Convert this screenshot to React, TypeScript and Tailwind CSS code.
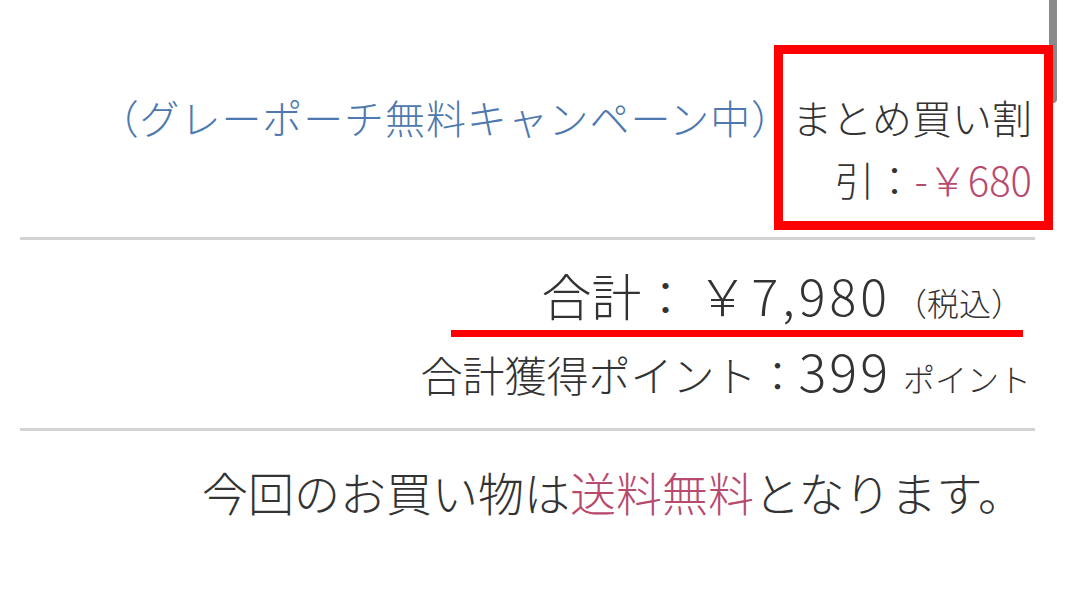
export default function App() {
  return (
    <div
      className="relative h-[601px] w-[1080px] overflow-hidden bg-white font-light text-[#333333]"
      style={{ fontFamily: '"Noto Sans CJK JP", "Noto Sans", sans-serif' }}
    >
      {/* 注文合計ブロック */}
      <div className="ml-[20px] flex w-[1015px] flex-col">
        <div className="flex flex-col items-end pt-[86px] pb-[27px] pr-[3px] text-[40px] leading-[62px]">
          <div>
            <span className="tracking-[0.9px] text-[#4d78b0]">（グレーポーチ無料キャンペーン中）</span>
            <span>まとめ買い割</span>
          </div>
          <div>
            引：<span className="text-[#b84a6e]">-￥680</span>
          </div>
        </div>

        <div className="h-[3px] bg-[#d3d3d3]" />

        <div className="flex flex-col items-end pr-[12px] pt-[24px]">
          <div className="flex items-baseline leading-[60px]">
            <span className="text-[50px]">合計</span>
            <span className="mr-[8px] text-[48px]">：</span>
            <span className="text-[50px] tracking-[4px]">￥7,980</span>
            <span className="ml-[4px] text-[32px]">（税込）</span>
          </div>
          <div className="-mt-[2px] h-[7px] w-[572px] bg-[#ff0000]" />
        </div>

        <div className="flex items-baseline justify-end pr-[4px] pt-[8px] pb-[25px] leading-[50px]">
          <span className="text-[42px]">合計獲得ポイント：</span>
          <span className="text-[52px] tracking-[3px]">399</span>
          <span className="ml-[12px] text-[32px]">ポイント</span>
        </div>

        <div className="h-[3px] bg-[#d3d3d3]" />

        <div className="flex justify-end pr-[11px] pt-[30px] text-[46px] leading-[60px]">
          <p>
            今回のお買い物は<span className="text-[#b84a6e]">送料無料</span>となります。
          </p>
        </div>
      </div>

      {/* スクロールバー */}
      <div className="absolute top-0 left-[1049px] h-[103px] w-[8px] rounded-b bg-[#8a8a8a]" />

      {/* 注目枠 */}
      <div className="absolute top-[45px] left-[774px] h-[185px] w-[279px] border-[9px] border-[#ff0000]" />
    </div>
  );
}
